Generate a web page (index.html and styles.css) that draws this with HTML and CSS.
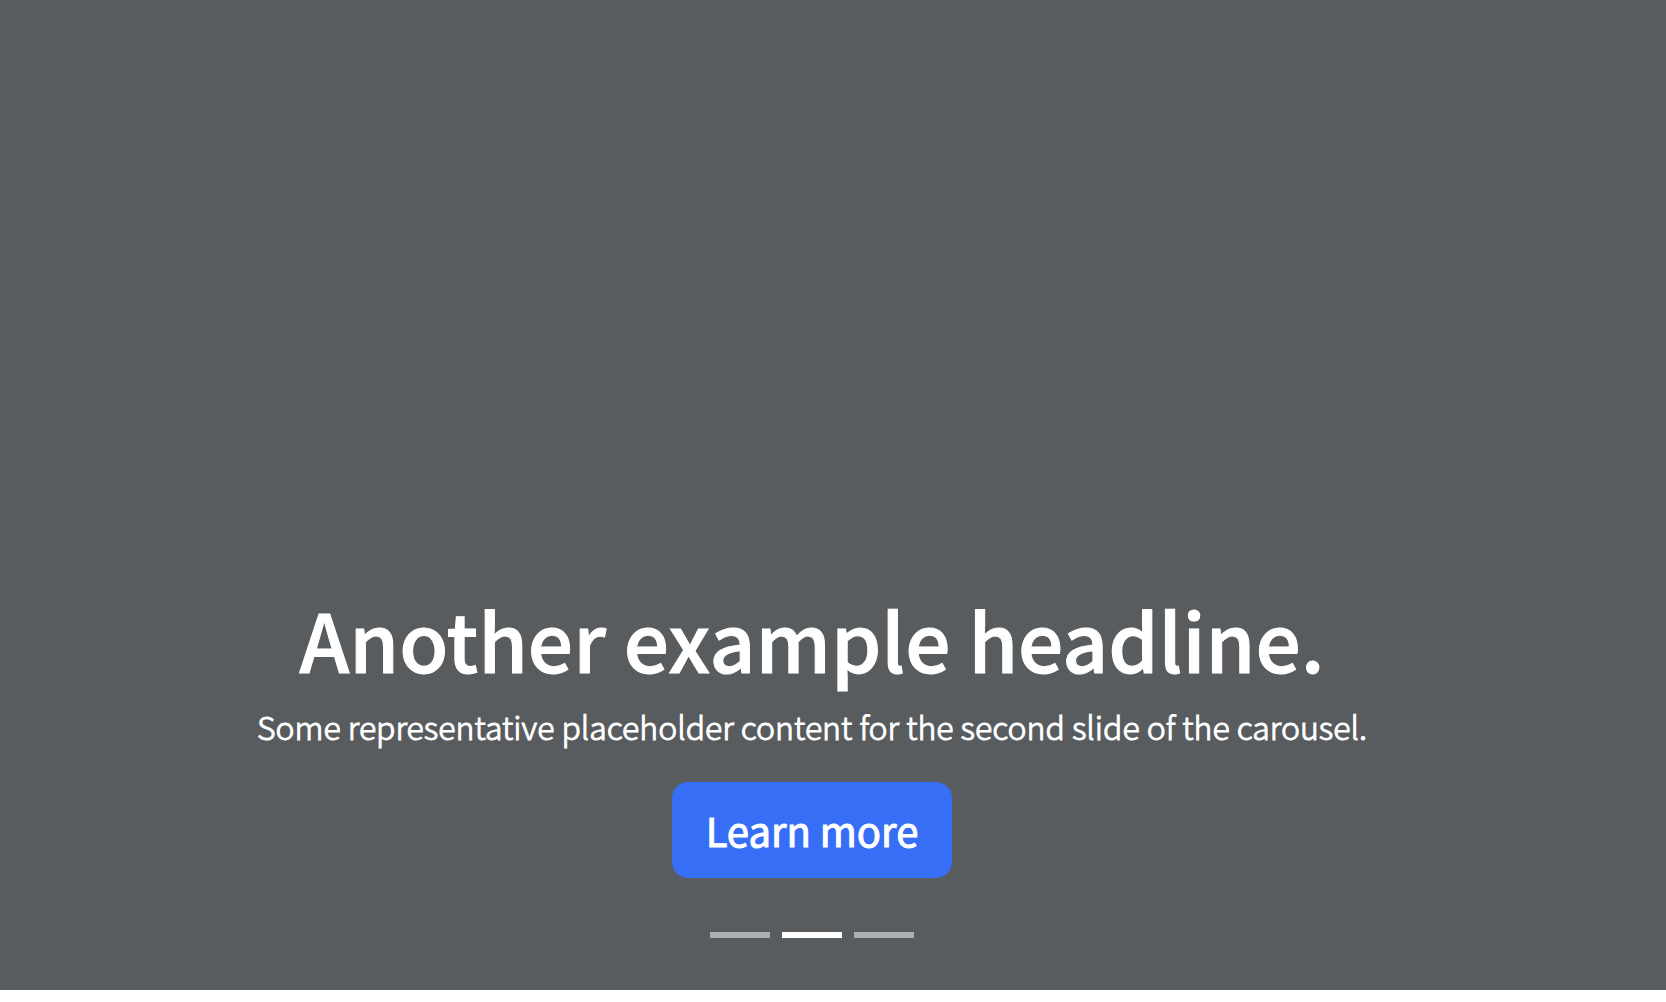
FILE: index.html
```html
<!DOCTYPE html>
<html lang="en">
<head>
<meta charset="utf-8">
<title>Carousel</title>
<link rel="stylesheet" href="styles.css">
</head>
<body>
<main class="carousel">
  <section class="caption">
    <h1 class="headline">Another example headline.</h1>
    <p class="lead">Some representative placeholder content for the second slide of the carousel.</p>
    <a class="cta" href="#">Learn more</a>
  </section>
  <div class="indicators">
    <button class="indicator" type="button" aria-label="Slide 1"></button>
    <button class="indicator active" type="button" aria-label="Slide 2" aria-current="true"></button>
    <button class="indicator" type="button" aria-label="Slide 3"></button>
  </div>
</main>
</body>
</html>
```
FILE: styles.css
```css
* { box-sizing: border-box; }

body {
  margin: 0;
  background: #fff;
  color: #fff;
  font-family: "Noto Sans CJK SC", "Noto Sans", sans-serif;
}

.carousel {
  display: flex;
  flex-direction: column;
  justify-content: flex-end;
  align-items: center;
  min-height: calc(100vh - 12px);
  padding: 0 42px 52px 0;
  background: #595c5e;
}

.caption {
  display: flex;
  flex-direction: column;
  align-items: center;
  text-align: center;
  -webkit-text-stroke: 1px #fff;
}

.headline {
  margin: 0 0 14px;
  font-size: 80px;
  font-weight: 500;
  line-height: 96px;
}

.lead {
  margin: 0 0 30px;
  font-size: 32px;
  font-weight: 300;
  line-height: 52px;
}

.cta {
  padding: 16px 34px;
  border-radius: 16px;
  background: #366ff6;
  color: #fff;
  font-size: 40px;
  font-weight: 400;
  line-height: 64px;
  text-decoration: none;
}

.indicators {
  display: flex;
  gap: 12px;
  margin-top: 54px;
}

.indicator {
  width: 60px;
  height: 6px;
  padding: 0;
  border: 0;
  background: #fff;
  opacity: 0.5;
}

.indicator.active { opacity: 1; }
```
